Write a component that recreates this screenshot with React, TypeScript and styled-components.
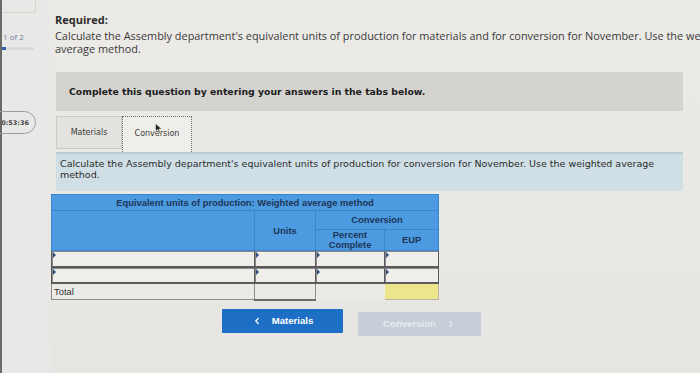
import React from "react";
import styled, { createGlobalStyle } from "styled-components";
import { ChevronLeft, ChevronRight } from "lucide-react";

const Global = createGlobalStyle`
  html, body {
    margin: 0;
    padding: 0;
    width: 700px;
    height: 373px;
    overflow: hidden;
    background: #eae9e5;
  }
  * { box-sizing: border-box; }
`;

const Page = styled.div`
  display: flex;
  width: 700px;
  height: 373px;
  background: linear-gradient(180deg, #ebeae6 0%, #e9e8e4 60%, #e6e5e1 100%);
`;

const Sidebar = styled.aside`
  width: 50px;
  flex: none;
  border-left: 2px solid #6a6a6a;
  display: flex;
  flex-direction: column;
  position: relative;
  background: #e8e8e6;
`;

const TopStub = styled.div`
  width: 34px;
  height: 13px;
  border: 1px solid #d6d6d3;
  border-top: none;
  border-left: none;
  border-radius: 0 0 3px 0;
`;

const Counter = styled.div`
  margin-top: 19px;
  font-family: "Open Sans", sans-serif;
  font-size: 8px;
  line-height: 10px;
  color: #6f82a3;
  padding-left: 1px;
`;

const Progress = styled.div`
  margin-top: 5px;
  width: 32px;
  height: 3px;
  background: linear-gradient(90deg, #2c65ad 0 4px, #d9dadb 4px 100%);
`;

const Timer = styled.div`
  margin-top: 61px;
  margin-left: -14px;
  width: 48px;
  height: 23px;
  border: 1px solid #9c9c9a;
  border-radius: 12px;
  display: flex;
  align-items: center;
  justify-content: flex-end;
  padding-right: 6px;
  font-family: "DejaVu Sans", sans-serif;
  font-weight: bold;
  font-size: 6.5px;
  color: #4a4a4a;
`;

const Main = styled.main`
  flex: 1;
  padding-top: 13px;
  padding-left: 6px;
  display: flex;
  flex-direction: column;
  min-width: 0;
`;

const Heading = styled.div`
  font-family: "Open Sans", sans-serif;
  font-weight: 700;
  font-size: 11px;
  line-height: 14px;
  color: #2a2a2a;
  margin-left: -1px;
`;

const Prompt = styled.p`
  margin: 2px 0 0 -1px;
  width: 705px;
  font-family: "Open Sans", sans-serif;
  font-size: 10.9px;
  line-height: 13px;
  color: #3a3a3a;
`;

const Banner = styled.div`
  margin-top: 17px;
  width: 627px;
  height: 39px;
  background: #d4d3d0;
  display: flex;
  align-items: center;
  padding-left: 13px;
  font-family: "DejaVu Sans", sans-serif;
  font-weight: bold;
  font-size: 9.3px;
  color: #1c1c1c;
`;

const TabRow = styled.div`
  margin-top: 5px;
  display: flex;
  align-items: flex-start;
  height: 36px;
`;

const Tab = styled.div<{ $active?: boolean }>`
  position: relative;
  width: ${(p) => (p.$active ? 70 : 66)}px;
  height: ${(p) => (p.$active ? 36 : 33)}px;
  display: flex;
  align-items: center;
  justify-content: center;
  padding-bottom: ${(p) => (p.$active ? 3 : 0)}px;
  font-family: "DejaVu Sans", sans-serif;
  font-size: 8px;
  color: #3c3c3c;
  background: ${(p) => (p.$active ? "#efeeea" : "#e3e2de")};
  border: ${(p) => (p.$active ? "1px dotted #6d6d6d" : "1px solid #cbcac6")};
  border-bottom: ${(p) => (p.$active ? "none" : "1px solid #cbcac6")};
`;

const Cursor = styled.svg`
  position: absolute;
  left: 32px;
  top: 6px;
`;

const Instruction = styled.div`
  width: 627px;
  height: 39px;
  background: #cfdfe5;
  border-top: 2px solid #bccbd1;
  padding: 5px 0 0 4px;
  font-family: "DejaVu Sans", sans-serif;
  font-size: 9.5px;
  line-height: 10.5px;
  color: #2c2c2c;
`;

const Table = styled.table`
  margin-top: 3px;
  margin-left: -5px;
  width: 387px;
  border-collapse: collapse;
  table-layout: fixed;
  font-family: "Liberation Sans", Arial, sans-serif;
  font-size: 9.4px;
`;

const HeadCell = styled.th<{ $h: number }>`
  height: ${(p) => p.$h}px;
  padding: 0;
  background: #4c9be0;
  border: 1px solid #3a86cc;
  color: #1d3557;
  font-weight: bold;
  text-align: center;
  vertical-align: middle;
  line-height: 10px;
`;

const InputCell = styled.td`
  position: relative;
  height: 16px;
  padding: 0;
  background: #efeeea;
  border: 1px solid #5a5a5a;
  border-bottom-width: 2px;
  box-shadow: inset 1px 1px 0 #8a8a8a;
`;

const Marker = styled.span`
  position: absolute;
  left: 1px;
  top: 1px;
  width: 0;
  height: 0;
  border-top: 3px solid transparent;
  border-bottom: 3px solid transparent;
  border-left: 3px solid #2c4f7c;
`;

const TotalLabel = styled.td`
  height: 17px;
  padding: 0 0 0 2px;
  background: #ebeae6;
  border: 1px solid #8d8d8b;
  color: #333;
  vertical-align: middle;
`;

const PlainCell = styled.td<{ $kind: "sunken" | "empty" | "total" }>`
  height: 17px;
  padding: 0;
  background: ${(p) => (p.$kind === "total" ? "#ece58c" : "#ebeae6")};
  border: ${(p) =>
    p.$kind === "empty" ? "1px solid transparent" : p.$kind === "total" ? "1px solid #b8b6a8" : "1px solid #8d8d8b"};
  border-bottom: ${(p) => (p.$kind === "sunken" ? "2px solid #6a6a6a" : undefined)};
`;

const ButtonRow = styled.div`
  margin-top: 8px;
  margin-left: 166px;
  display: flex;
  gap: 15px;
  align-items: flex-start;
`;

const NavButton = styled.button<{ $primary?: boolean }>`
  width: ${(p) => (p.$primary ? 121 : 123)}px;
  height: 24px;
  margin-top: ${(p) => (p.$primary ? 0 : 3)}px;
  border: none;
  border-radius: 1px;
  display: flex;
  align-items: center;
  justify-content: center;
  gap: 10px;
  font-family: "Liberation Sans", Arial, sans-serif;
  font-weight: bold;
  font-size: 9.6px;
  background: ${(p) => (p.$primary ? "#1c6fc4" : "#c6ced7")};
  color: ${(p) => (p.$primary ? "#ffffff" : "#e6ebf0")};
  padding: 0;
`;

const rows = [0, 1];

export default function App() {
  return (
    <>
      <Global />
      <Page>
        <Sidebar>
          <TopStub />
          <Counter>1 of 2</Counter>
          <Progress />
          <Timer>0:53:36</Timer>
        </Sidebar>
        <Main>
          <Heading>Required:</Heading>
          <Prompt>
            Calculate the Assembly department's equivalent units of production for materials and for conversion for
            November. Use the weighted average method.
          </Prompt>
          <Banner>Complete this question by entering your answers in the tabs below.</Banner>
          <TabRow>
            <Tab>Materials</Tab>
            <Tab $active>
              Conversion
              <Cursor width="8" height="11" viewBox="0 0 8 11">
                <path d="M0.5 0.5 L0.5 8.5 L2.6 6.6 L4 10 L5.3 9.4 L3.9 6.1 L6.8 6.1 Z" fill="#222" stroke="#eee" strokeWidth="0.6" />
              </Cursor>
            </Tab>
          </TabRow>
          <Instruction>
            Calculate the Assembly department's equivalent units of production for conversion for November. Use the
            weighted average method.
          </Instruction>
          <Table>
            <colgroup>
              <col style={{ width: 203 }} />
              <col style={{ width: 61 }} />
              <col style={{ width: 69 }} />
              <col style={{ width: 54 }} />
            </colgroup>
            <thead>
              <tr>
                <HeadCell $h={16} colSpan={4}>
                  Equivalent units of production: Weighted average method
                </HeadCell>
              </tr>
              <tr>
                <HeadCell $h={19} rowSpan={2} />
                <HeadCell $h={19} rowSpan={2}>
                  Units
                </HeadCell>
                <HeadCell $h={19} colSpan={2}>
                  Conversion
                </HeadCell>
              </tr>
              <tr>
                <HeadCell $h={20}>
                  Percent
                  <br />
                  Complete
                </HeadCell>
                <HeadCell $h={20}>EUP</HeadCell>
              </tr>
            </thead>
            <tbody>
              {rows.map((r) => (
                <tr key={r}>
                  {[0, 1, 2, 3].map((c) => (
                    <InputCell key={c}>
                      <Marker />
                    </InputCell>
                  ))}
                </tr>
              ))}
              <tr>
                <TotalLabel>Total</TotalLabel>
                <PlainCell $kind="sunken" />
                <PlainCell $kind="empty" />
                <PlainCell $kind="total" />
              </tr>
            </tbody>
          </Table>
          <ButtonRow>
            <NavButton $primary>
              <ChevronLeft size={10} strokeWidth={3} />
              Materials
            </NavButton>
            <NavButton>
              Conversion
              <ChevronRight size={10} strokeWidth={3} />
            </NavButton>
          </ButtonRow>
        </Main>
      </Page>
    </>
  );
}
